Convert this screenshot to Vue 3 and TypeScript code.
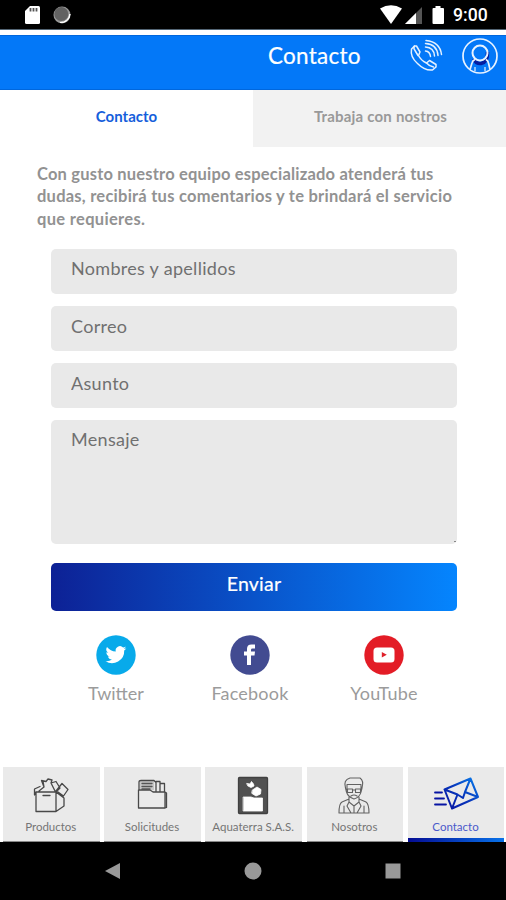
<script setup lang="ts">
import { ref } from 'vue'

const tabs: string[] = ['Contacto', 'Trabaja con nostros']
const activeTab = ref(0)
const intro: string[] = [
  'Con gusto nuestro equipo especializado atenderá tus',
  'dudas, recibirá tus comentarios y te brindará el servicio',
  'que requieres.',
]
const fields: string[] = ['Nombres y apellidos', 'Correo', 'Asunto']
const navItems: string[] = ['Productos', 'Solicitudes', 'Aquaterra S.A.S.', 'Nosotros', 'Contacto']
const activeNav = ref(4)
</script>

<template>
  <div class="screen">
    <div class="status">
      <svg class="status-left" width="50" height="20" viewBox="0 0 50 20">
        <path d="M6 1h8.500q1.500 0 1.500 1.500v15q0 1.500-1.500 1.500h-12Q1 19 1 17.500V6z" fill="#fff" />
        <path d="M6.500 3v3.500M9.500 3v3.500M12.500 3v3.500" stroke="#555" stroke-width="1.800" />
        <circle cx="38" cy="10" r="8.500" fill="#999" />
        <path d="M46 9a8.500 8.500 0 0 1-10 8.500q8 0 10-8.500" fill="#fff" stroke="#fff" />
        <circle cx="37.300" cy="9" r="7" fill="#626262" />
      </svg>
      <svg class="status-right" width="66" height="20" viewBox="0 0 66 20">
        <path d="M0 3.500Q11 -3 22 3.500L11 19z" fill="#fff" />
        <path d="M42 2v17H25z" fill="#555" />
        <path d="M36 8v11H25z" fill="#fff" />
        <path d="M55.500 1h5v2H63q1 0 1 1v14q0 1-1 1H53.500q-1 0-1-1V4q0-1 1-1h2z" fill="#fff" />
      </svg>
      <span class="clock">9:00</span>
    </div>

    <header class="header">
      <h1>Contacto</h1>
      <svg class="call" width="34" height="34" viewBox="0 0 34 34" fill="none" stroke="#e4f1ff" stroke-width="1.500" stroke-linecap="round" stroke-linejoin="round">
        <path d="M5.500 7L2.500 10Q1 18 8.500 24.500Q16 32 23.500 31L27 28V25.500L20.500 21.500L17.500 24Q12 21.500 9.500 16.500L11 13L7.500 7Z" />
        <path d="M5.500 7Q4 9 6 11.500L9 16.500M17.500 24Q20 27 24.500 28" />
        <path d="M16.500 12Q21 12.500 21.500 17.500M16.500 8Q25 8.500 25.500 17M16.500 4.500Q28 5 29 16.500M17 1.500Q31 3 32.500 15.500" />
      </svg>
      <svg class="user" width="38" height="38" viewBox="0 0 38 38" fill="none">
        <circle cx="19" cy="19" r="17" stroke="#e7f2ff" stroke-width="1.700" />
        <path d="M12.500 22Q15 27 20 26.500Q27 25 26.500 15" stroke="#041da0" stroke-width="3.500" />
        <path d="M9 32.500L11 26Q11.500 23.500 14 22.500M29 32.500L27.500 26Q27 23.500 25 22.500" stroke="#e7f2ff" stroke-width="1.700" />
        <path d="M14 34V30M24 34V30" stroke="#e7f2ff" stroke-width="1.200" />
        <circle cx="19" cy="16" r="7.500" stroke="#e7f2ff" stroke-width="2" />
      </svg>
    </header>

    <div class="tabs">
      <button v-for="(tab, i) in tabs" :key="tab" class="tab" :class="{ active: activeTab === i }" @click="activeTab = i">{{ tab }}</button>
    </div>

    <main class="main">
      <p class="intro"><span v-for="(line, i) in intro" :key="i" class="line" :class="'line-' + i">{{ line }}</span></p>
      <form class="form" @submit.prevent>
        <input v-for="field in fields" :key="field" class="field" :placeholder="field" />
        <textarea class="field message" placeholder="Mensaje"></textarea>
        <button class="send">Enviar</button>
      </form>

      <div class="social">
        <a class="network twitter">
          <svg width="40" height="40" viewBox="0 0 40 40">
            <circle cx="20" cy="20" r="19.700" fill="#08aaea" />
            <path transform="translate(9.500 9.200) scale(.87)" d="M24 4.600a10 10 0 0 1-2.800.8 5 5 0 0 0 2.200-2.700c-1 .6-2 1-3.200 1.200a4.900 4.900 0 0 0-8.400 4.500A14 14 0 0 1 1.700 3.200a4.900 4.900 0 0 0 1.500 6.600c-.8 0-1.600-.3-2.200-.6a4.900 4.900 0 0 0 4 4.900c-.7.200-1.500.2-2.200.1a4.900 4.900 0 0 0 4.600 3.400A9.900 9.900 0 0 1 0 19.500 14 14 0 0 0 21.500 7.100 10 10 0 0 0 24 4.600z" fill="#fff" />
          </svg>
          <span>Twitter</span>
        </a>
        <a class="network facebook">
          <svg width="40" height="40" viewBox="0 0 40 40">
            <circle cx="20" cy="20" r="19.700" fill="#424b91" />
            <path d="M17 30V20.500h-3v-4h3v-2.700Q17 9.500 21.500 9.500H25v4h-2.500q-1.500 0-1.500 1.400v1.600h4l-.5 4H21V30z" fill="#fff" />
          </svg>
          <span>Facebook</span>
        </a>
        <a class="network youtube">
          <svg width="40" height="40" viewBox="0 0 40 40">
            <circle cx="20" cy="20" r="19.700" fill="#e31c26" />
            <rect x="9.500" y="12.500" width="21" height="15" rx="3.500" fill="#fff" />
            <path d="M17.800 17v5.500l5-2.700z" fill="#df202a" />
          </svg>
          <span>YouTube</span>
        </a>
      </div>
    </main>

    <nav class="bottom">
      <a v-for="(item, i) in navItems" :key="item" class="nav-item" :class="['nav-' + i, { current: activeNav === i }]" @click="activeNav = i">
        <svg width="48" height="40" viewBox="0 0 48 40" fill="none" stroke="#484848" stroke-width="1.300" stroke-linejoin="round" stroke-linecap="round">
          <template v-if="i === 0">
            <path d="M9 17H29V36.500H9ZM29 17L37 23V31L29 36.500M9 17L7.500 20V14L13 11.500M12 16L17 12L14.500 5.500L19 6.500L21 4L25 5L24 8L29 6.500L33 13L29 17M17 12L16 6M24 8L28 16M29 16L35 8.500L41 14.500L36.500 21L31 17M16 20.500H23" />
          </template>
          <template v-else-if="i === 1">
            <path d="M10.500 15V33H37V17H25L22 15ZM11 14V7Q11 5.500 13 5.500H26L28 7.500V16M28 6.500H32V16M32 8.500H36.500V17M37 17L38.500 18V32.500L37 33M14 8.500H24M14 11.500H24M14 14H22" />
            <path d="M12 6H26V15H12Z" fill="#777" fill-opacity=".3" stroke="none" />
          </template>
          <template v-else-if="i === 2">
            <rect x="9.500" y="2.500" width="29" height="36" rx="1" fill="#515151" stroke="#404040" />
            <path d="M14.500 22H22L25 23H33.500V36H14.500ZM18 8.500L21 9L22.500 6.500L24.500 9L25 11L22 12.500L19 11ZM23.500 15L28 12L32 14.500L31.500 19L27 21L23 18.500Z" fill="#fff" stroke="#fff" stroke-width=".8" />
          </template>
          <template v-else-if="i === 3">
            <path d="M15.500 13Q13 5 20 3H30Q34 5.500 32 13L31 17Q30 22 24 24Q18 22 16.500 17ZM17 9.500H31M17 9.500V15M31 9.500V15M17.500 14H22.500V17.500H17.500ZM25.500 14H30.500V17.500H25.500ZM22.500 15H25.500M21 21Q24 19 27 21M19 22V27L24 31L29 27V22M19 24L12 27Q9 28.500 9 38H39Q39 29 36 27L29 24M19 27L17 31L21 38M29 27L31 31L27 38M24 31V38M14 31V38M34 31V38" stroke="#626262" stroke-width="1.100" />
          </template>
          <template v-else>
            <defs>
              <linearGradient id="mail" x1="0" y1="1" x2="1" y2="0"><stop stop-color="#0712a0" /><stop offset=".5" stop-color="#0737bc" /><stop offset="1" stop-color="#087dec" /></linearGradient>
            </defs>
            <path d="M12.500 14.500L38.500 3.500L46 22L20 33.500ZM12.500 14.500L25.500 19.500L31 23L33 17L38.500 3.500M20 33.500L25.500 19.500M46 22L33 17" stroke="url(#mail)" stroke-width="2" />
            <path d="M3 17.500H10M3 23.500H12M3 29.500H14" stroke="#0714a3" stroke-width="1.800" />
          </template>
        </svg>
        <span>{{ item }}</span>
      </a>
    </nav>

    <div class="system">
      <svg width="18" height="20" viewBox="0 0 18 20"><path d="M1 10L16 2V18Z" fill="#999" /></svg>
      <svg width="18" height="20" viewBox="0 0 18 20"><circle cx="9" cy="10" r="8.500" fill="#999" /></svg>
      <svg width="18" height="20" viewBox="0 0 18 20"><path d="M1.500 2.500h15v15h-15z" fill="#999" /></svg>
    </div>
  </div>
</template>

<style>
body { margin: 0; }
</style>

<style scoped>
* { box-sizing: border-box; }
.screen { width: 506px; height: 900px; display: flex; flex-direction: column; background: #fff; font-family: Lato, "Noto Sans", sans-serif; overflow: hidden; }
button { border: 0; font: inherit; padding: 0; cursor: pointer; }
.status { height: 30px; flex: none; background: #000; border-bottom: 1px solid #536574; display: flex; align-items: flex-start; padding: 5px 18px 0 24px; }
.status-right { margin-left: 306px; flex: none; }
.status-left { flex: none; }
.clock { margin-left: 7px; color: #fff; font: 500 17.600px/21px Roboto, sans-serif; white-space: nowrap; }
.header { height: 55px; margin-top: 5px; flex: none; background: #0378f8; border-top: 1px solid #0067dd; border-bottom: 1px solid #0067dd; display: flex; padding-left: 268px; color: #fff; }
h1 { width: 92px; margin: 5px 0 0; font-size: 22.500px; line-height: 30px; font-weight: 400; letter-spacing: .25px; white-space: nowrap; -webkit-text-stroke: .2px; }
.call { margin: 3px 0 0 49px; flex: none; }
.user { margin: 1px 0 0 18px; flex: none; }
.tabs { display: flex; height: 57px; flex: none; }
.tab { width: 254px; background: #f2f2f2; color: #999; font-size: 15px; line-height: 20px; font-weight: 700; letter-spacing: .2px; padding: 0 0 6px 2px; }
.tab.active { background: #fff; color: #155edb; letter-spacing: 0; padding-left: 0; }
.main { height: 620px; padding: 16px 37px 0; flex: none; }
.intro { margin: 0; color: #929292; font-size: 16.500px; line-height: 22.300px; font-weight: 700; }
.line { display: block; white-space: nowrap; letter-spacing: .19px; }
.line-1 { letter-spacing: .24px; }
.line-2 { letter-spacing: .32px; }
.form { margin: 19px 12px 0 14px; display: flex; flex-direction: column; gap: 12.500px; }
.field { display: block; width: 406px; height: 44.700px; border: 0; border-radius: 5px; background: #e9e9e9; padding: 0 20px 5.500px; font: 400 18px/24px Lato, "Noto Sans", sans-serif; letter-spacing: .3px; outline: 0; resize: none; }
.field::placeholder { color: #707070; opacity: 1; }
.message { height: 124px; padding-top: 7px; background: linear-gradient(#888, #888) 403px 121px / 2px 1px no-repeat #e9e9e9; }
.send { width: 406px; height: 48px; margin-top: 6px; padding-bottom: 6px; border-radius: 5px; color: #fff; background: linear-gradient(90deg, #0d2195, #0585fe); font-size: 19.500px; letter-spacing: .25px; -webkit-text-stroke: .2px; }
.social { margin: 24px 8px 0 12px; display: flex; gap: 0; }
.network { width: 134px; display: flex; flex-direction: column; align-items: center; color: #9b9b9b; font-size: 18px; line-height: 24px; letter-spacing: .2px; gap: 6px; }
.twitter { letter-spacing: 0; }
.bottom { height: 75px; flex: none; display: grid; grid-template-columns: repeat(5, 96.500px); column-gap: 4.700px; padding-left: 3px; }
.nav-item { background: #eaeaea; display: flex; flex-direction: column; align-items: center; padding: 8px 1px 0 0; color: #757575; font-size: 11.500px; line-height: 16px; border-bottom: 1px solid #888; }
.nav-item span { margin-top: 4px; white-space: nowrap; }
.current { color: #4b59cb; border-bottom: 4px solid; border-image: linear-gradient(90deg, #050b92, #0873ea) 1; }
.system { flex: 1; background: #000; display: flex; align-items: center; justify-content: center; gap: 122px; }
</style>
